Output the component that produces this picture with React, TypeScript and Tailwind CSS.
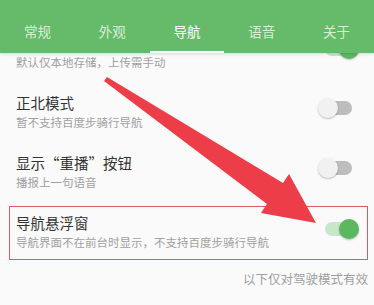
const tabs = ["常规", "外观", "导航", "语音", "关于"];

const Toggle = ({ on, className = "" }: { on: boolean; className?: string }) => (
  <div className={`relative w-[34px] h-[20px] shrink-0 ${className}`}>
    <div
      className={`absolute top-[3px] h-[14px] rounded-full ${
        on ? "left-0 right-[3px] bg-[#c8e6c9]" : "left-[3px] right-0 bg-[#bdbdbd]"
      }`}
    />
    <div
      className={`absolute top-0 w-[20px] h-[20px] rounded-full shadow-[0_1px_2px_rgba(0,0,0,0.25)] ${
        on ? "right-0 bg-[#5cb860]" : "left-0 bg-[#f1f1f1]"
      }`}
    />
  </div>
);

const Row = ({
  title,
  sub,
  on,
  children,
}: {
  title?: string;
  sub: string;
  on: boolean;
  children?: React.ReactNode;
}) => (
  <div className="relative h-[60px] flex items-start justify-between pl-[16px]">
    <div className="pt-[11px]">
      <div className="h-[22px] text-[14.5px] leading-[22px] text-[#333]">{title}</div>
      <div className="text-[11.5px] leading-[16px] text-[#a0a0a0]">{sub}</div>
    </div>
    <Toggle on={on} className={on ? "mt-[18px] mr-[15px]" : "mt-[17px] mr-[22px]"} />
    {children}
  </div>
);

export default function App() {
  return (
    <div
      className="relative w-[374px] h-[305px] overflow-hidden bg-[#fafafa]"
      style={{ fontFamily: '"Noto Sans CJK SC", "Noto Sans", sans-serif' }}
    >
      {/* Tab bar */}
      <div className="relative z-10 h-[53px] bg-[#66bb6a] flex shadow-[0_1px_3px_rgba(0,0,0,0.15)]">
        {tabs.map((t) => (
          <div key={t} className="relative flex-1 flex items-center justify-center pt-[10px]">
            <span
              className={`text-[13.5px] ${t === "导航" ? "text-white" : "text-white/75"}`}
            >
              {t}
            </span>
            {t === "导航" && (
              <div className="absolute bottom-0 left-0 right-0 h-[2px] bg-white" />
            )}
          </div>
        ))}
      </div>

      {/* Settings list, scrolled a little under the tab bar */}
      <div className="-mt-[32px]">
        <Row sub="默认仅本地存储，上传需手动" on />
        <Row title="正北模式" sub="暂不支持百度步骑行导航" on={false} />
        <Row title="显示“重播”按钮" sub="播报上一句语音" on={false} />
        <Row title="导航悬浮窗" sub="导航界面不在前台时显示，不支持百度步骑行导航" on>
          <div className="absolute left-[9px] right-[6px] top-[5px] h-[54px] border-[1.5px] border-[#e05860]" />
        </Row>
        <div className="mt-[9px] pr-[6px] text-right text-[12.5px] leading-[18px] text-[#a0a0a0]">
          以下仅对驾驶模式有效
        </div>
      </div>

      {/* Annotation arrow */}
      <svg
        className="absolute inset-0 z-20 pointer-events-none"
        width="374"
        height="305"
        viewBox="0 0 374 305"
      >
        <polygon
          points="107,77 283,183 289,174 316,223 261,213 267,204 104,81"
          fill="#ec3d48"
          strokeLinejoin="round"
        />
      </svg>
    </div>
  );
}
